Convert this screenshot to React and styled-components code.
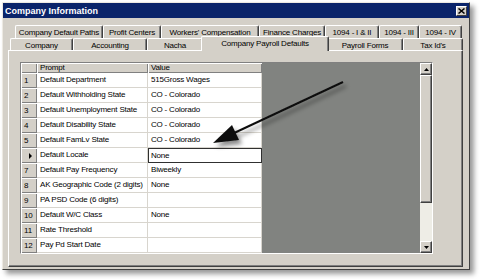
import React from 'react';
import styled, { createGlobalStyle } from 'styled-components';

const GlobalStyle = createGlobalStyle`
  html, body {
    margin: 0;
    padding: 0;
    background: #ffffff;
  }
  body {
    font-family: "Liberation Sans", Arial, sans-serif;
    font-size: 8px;
    letter-spacing: -0.2px;
    color: #000;
  }
`;

const face = '#d4d0c8';

const Page = styled.div`
  position: relative;
  width: 481px;
  height: 279px;
  padding: 2px 0 0 2px;
  box-sizing: border-box;
  overflow: hidden;
`;

const Window = styled.div`
  width: 468px;
  height: 268px;
  box-sizing: border-box;
  background: ${face};
  border: 1px solid;
  border-color: #ece9e2 #404040 #404040 #ece9e2;
  box-shadow: 4px 4px 5px rgba(0, 0, 0, 0.4);
  display: flex;
  flex-direction: column;
`;

const TitleBar = styled.div`
  height: 15px;
  background: #0a246a;
  display: flex;
  align-items: center;
  justify-content: space-between;
  padding: 0 2px;
`;

const Title = styled.span`
  color: #fff;
  font-weight: bold;
  font-size: 9px;
  letter-spacing: 0;
`;

const CloseButton = styled.div`
  width: 11px;
  height: 10px;
  box-sizing: border-box;
  background: ${face};
  border: 1px solid;
  border-color: #fff #404040 #404040 #fff;
  display: flex;
  align-items: center;
  justify-content: center;
`;

const TabArea = styled.div`
  flex: 1;
  display: flex;
  flex-direction: column;
  padding: 7px 6px 2px 5px;
`;

const TabRow = styled.div`
  display: flex;
  height: ${p => p.$h}px;
  margin: 0 ${p => p.$right}px 0 ${p => p.$left}px;
`;

const Tab = styled.div`
  position: relative;
  width: ${p => p.$w}px;
  box-sizing: border-box;
  background: ${face};
  border-top: 1px solid #fff;
  border-left: 1px solid #fff;
  border-right: 1px solid #404040;
  box-shadow: inset -1px 0 0 #808080;
  border-radius: 2px 2px 0 0;
  display: flex;
  justify-content: center;
  padding-top: ${p => p.$pad}px;
  white-space: nowrap;
`;

const ActiveTab = styled(Tab)`
  z-index: 1;
  width: ${p => p.$w + 4}px;
  margin: -2px -2px -1px;
  padding-top: 2px;
`;

const Panel = styled.div`
  flex: 1;
  box-sizing: border-box;
  border: 1px solid;
  border-color: #fff #404040 #404040 #fff;
  box-shadow: inset -1px -1px 0 #808080;
  padding: 11px 0 0 11px;
`;

const Grid = styled.div`
  width: 413px;
  height: 192px;
  box-sizing: border-box;
  border: 1px solid;
  border-color: #808080 #fff #fff #808080;
  display: flex;
`;

const Workspace = styled.div`
  flex: 1;
  background: #818380;
`;

const Table = styled.div`
  display: grid;
  grid-template-columns: 16px 111px 114px;
  grid-template-rows: 10px repeat(12, 15px);
  width: 241px;
`;

const HeadCell = styled.div`
  background: ${face};
  box-shadow: inset 1px 1px 0 #fff, inset -1px -1px 0 #808080;
  padding-left: 3px;
  line-height: 10px;
  white-space: nowrap;
  display: flex;
  align-items: center;
`;

const RowHead = styled(HeadCell)`
  line-height: 15px;
  position: relative;
`;

const Marker = styled.span`
  width: 0;
  height: 0;
  margin-left: 5px;
  border-top: 3px solid transparent;
  border-bottom: 3px solid transparent;
  border-left: 3px solid #000;
`;

const Cell = styled.div`
  background: #fff;
  box-sizing: border-box;
  border-right: 1px solid #d8d5ce;
  border-bottom: 1px solid #d8d5ce;
  padding-left: 3px;
  line-height: 14px;
  white-space: nowrap;
  overflow: hidden;
  ${p => p.$current && `
    border: 1px solid #303030;
    padding-left: 2px;
    line-height: 13px;
  `}
`;

const ScrollBar = styled.div`
  width: 12px;
  display: flex;
  flex-direction: column;
  background: #eeede6;
`;

const ScrollButton = styled.div`
  height: ${p => p.$h}px;
  box-sizing: border-box;
  background: ${face};
  border: 1px solid;
  border-color: #fff #404040 #404040 #fff;
  box-shadow: inset -1px -1px 0 #808080;
  display: flex;
  align-items: center;
  justify-content: center;
`;

const Track = styled.div`
  flex: 1;
`;

const Overlay = styled.svg`
  position: absolute;
  left: 0;
  top: 0;
  pointer-events: none;
`;

const backTabs = [
  ['Company Default Paths', 88],
  ['Profit Centers', 58],
  ["Workers' Compensation", 98],
  ['Finance Charges', 66],
  ['1094 - I & II', 54],
  ['1094 - III', 40],
  ['1094 - IV', 43]
];

const frontTabs = [
  ['Company', 63],
  ['Accounting', 74],
  ['Nacha', 56],
  ['Company Payroll Defaults', 124, true],
  ['Payroll Forms', 76],
  ["Tax Id's", 60]
];

const rows = [
  ['Default Department', '515Gross Wages'],
  ['Default Withholding State', 'CO - Colorado'],
  ['Default Unemployment State', 'CO - Colorado'],
  ['Default Disability State', 'CO - Colorado'],
  ['Default FamLv State', 'CO - Colorado'],
  ['Default Locale', 'None', true],
  ['Default Pay Frequency', 'Biweekly'],
  ['AK Geographic Code (2 digits)', 'None'],
  ['PA PSD Code (6 digits)', ''],
  ['Default W/C Class', 'None'],
  ['Rate Threshold', ''],
  ['Pay Pd Start Date', '']
];

const Tri = ({ down }) => (
  <svg width="5" height="3" viewBox="0 0 5 3">
    <polygon points={down ? '0,0 5,0 2.5,3' : '0,3 5,3 2.5,0'} fill="#000" />
  </svg>
);

export default function App() {
  return (
    <Page>
      <GlobalStyle />
      <Window>
        <TitleBar>
          <Title>Company Information</Title>
          <CloseButton>
            <svg width="7" height="6" viewBox="0 0 7 6">
              <path d="M0.5 0.5 L6.5 5.5 M6.5 0.5 L0.5 5.5" stroke="#000" strokeWidth="1.5" />
            </svg>
          </CloseButton>
        </TitleBar>
        <TabArea>
          <TabRow $h={13} $left={7} $right={1}>
            {backTabs.map(([label, w]) => (
              <Tab key={label} $w={w} $pad={2}>{label}</Tab>
            ))}
          </TabRow>
          <TabRow $h={12} $left={2} $right={0}>
            {frontTabs.map(([label, w, active]) =>
              active ? (
                <ActiveTab key={label} $w={w}>{label}</ActiveTab>
              ) : (
                <Tab key={label} $w={w} $pad={2}>{label}</Tab>
              )
            )}
          </TabRow>
          <Panel>
            <Grid>
              <Workspace>
                <Table>
                  <HeadCell />
                  <HeadCell>Prompt</HeadCell>
                  <HeadCell>Value</HeadCell>
                  {rows.map(([prompt, value, current], i) => (
                    <React.Fragment key={prompt}>
                      <RowHead>{current ? <Marker /> : i + 1}</RowHead>
                      <Cell>{prompt}</Cell>
                      <Cell $current={current}>{value}</Cell>
                    </React.Fragment>
                  ))}
                </Table>
              </Workspace>
              <ScrollBar>
                <ScrollButton $h={12}><Tri /></ScrollButton>
                <ScrollButton $h={128} />
                <Track />
                <ScrollButton $h={12}><Tri down /></ScrollButton>
              </ScrollBar>
            </Grid>
          </Panel>
        </TabArea>
      </Window>
      <Overlay width="481" height="279" viewBox="0 0 481 279">
        <defs>
          <filter id="shadow" x="-20%" y="-20%" width="140%" height="160%">
            <feDropShadow dx="3" dy="4" stdDeviation="2" floodColor="#000" floodOpacity="0.45" />
          </filter>
        </defs>
        <g filter="url(#shadow)">
          <line x1="343" y1="82" x2="232" y2="134" stroke="#111" strokeWidth="2" />
          <polygon points="213,143 232,125 239,140" fill="#111" />
        </g>
      </Overlay>
    </Page>
  );
}
